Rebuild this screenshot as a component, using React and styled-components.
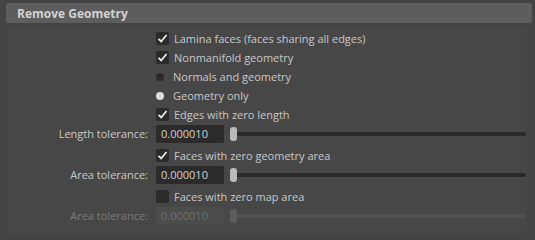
import React from 'react';
import styled, { createGlobalStyle } from 'styled-components';

const GlobalStyle = createGlobalStyle`
  html, body {
    margin: 0;
    padding: 0;
    background: #444444;
  }
  body {
    font-family: "Open Sans", "DejaVu Sans", sans-serif;
    font-size: 11px;
    color: #c8c8c8;
  }
`;

const Frame = styled.div`
  width: 535px;
  height: 240px;
  box-sizing: border-box;
  padding: 3px 3px 0 6px;
  display: flex;
  flex-direction: column;
  overflow: hidden;
`;

const Header = styled.div`
  height: 20px;
  background: #5d5d5d;
  border-radius: 2px;
  display: flex;
  align-items: center;
  padding-left: 11px;
  font-weight: 700;
  font-size: 12px;
  color: #d2d2d2;
`;

const Body = styled.div`
  margin: 4px 5px 0 2px;
  background: #474747;
  padding: 2px 0 6px 0;
  display: flex;
  flex-direction: column;
`;

const Row = styled.div`
  display: grid;
  grid-template-columns: 140px 1fr;
  column-gap: 8px;
  height: 19px;
  align-items: center;
  margin-bottom: ${p => (p.$spaced ? '3px' : '0')};
`;

const Label = styled.div`
  text-align: right;
  color: ${p => (p.$disabled ? '#7a7a7a' : '#c8c8c8')};
  white-space: nowrap;
`;

const Option = styled.div`
  grid-column: 2;
  display: flex;
  align-items: center;
  gap: 5px;
  white-space: nowrap;
`;

const Box = styled.span`
  width: 13px;
  height: 13px;
  border-radius: 2px;
  background: #2b2b2b;
  display: flex;
  align-items: center;
  justify-content: center;
`;

const Radio = styled.span`
  width: 8px;
  height: 8px;
  margin: 0 4px 0 0;
  border-radius: 50%;
  background: ${p => (p.$on ? '#dcdcdc' : '#2b2b2b')};
`;

const Control = styled.div`
  display: flex;
  align-items: center;
  gap: 6px;
  padding-right: 1px;
`;

const Field = styled.div`
  width: 63px;
  height: 18px;
  padding-left: 5px;
  border-radius: 2px;
  background: ${p => (p.$disabled ? '#4c4c4c' : '#2b2b2b')};
  color: ${p => (p.$disabled ? '#6e6e6e' : '#d0d0d0')};
  display: flex;
  align-items: center;
  flex-shrink: 0;
`;

const Slider = styled.div`
  flex: 1;
  position: relative;
  height: 14px;
  display: flex;
  align-items: center;
`;

const Track = styled.div`
  width: 100%;
  height: 4px;
  border-radius: 2px;
  background: ${p => (p.$disabled ? '#505050' : '#2a2a2a')};
`;

const Handle = styled.div`
  position: absolute;
  left: 0;
  top: 0;
  width: 7px;
  height: 14px;
  border-radius: 3px;
  background: ${p => (p.$disabled ? '#5c5c5c' : '#b9b9b9')};
`;

const Check = () => (
  <svg width="11" height="11" viewBox="0 0 11 11">
    <path d="M1.5 5.8 L4.2 8.5 L9.5 2" fill="none" stroke="#ececec" strokeWidth="1.8" />
  </svg>
);

const CheckRow = ({ checked, children }) => (
  <Row>
    <Option>
      <Box>{checked && <Check />}</Box>
      {children}
    </Option>
  </Row>
);

const RadioRow = ({ on, children }) => (
  <Row>
    <Option>
      <Radio $on={on} />
      {children}
    </Option>
  </Row>
);

const FieldRow = ({ label, value, disabled }) => (
  <Row $spaced>
    <Label $disabled={disabled}>{label}</Label>
    <Control>
      <Field $disabled={disabled}>{value}</Field>
      <Slider>
        <Track $disabled={disabled} />
        <Handle $disabled={disabled} />
      </Slider>
    </Control>
  </Row>
);

export default function App() {
  return (
    <>
      <GlobalStyle />
      <Frame>
        <Header>Remove Geometry</Header>
        <Body>
          <CheckRow checked>Lamina faces (faces sharing all edges)</CheckRow>
          <CheckRow checked>Nonmanifold geometry</CheckRow>
          <RadioRow>Normals and geometry</RadioRow>
          <RadioRow on>Geometry only</RadioRow>
          <CheckRow checked>Edges with zero length</CheckRow>
          <FieldRow label="Length tolerance:" value="0.000010" />
          <CheckRow checked>Faces with zero geometry area</CheckRow>
          <FieldRow label="Area tolerance:" value="0.000010" />
          <CheckRow>Faces with zero map area</CheckRow>
          <FieldRow label="Area tolerance:" value="0.000010" disabled />
        </Body>
      </Frame>
    </>
  );
}
